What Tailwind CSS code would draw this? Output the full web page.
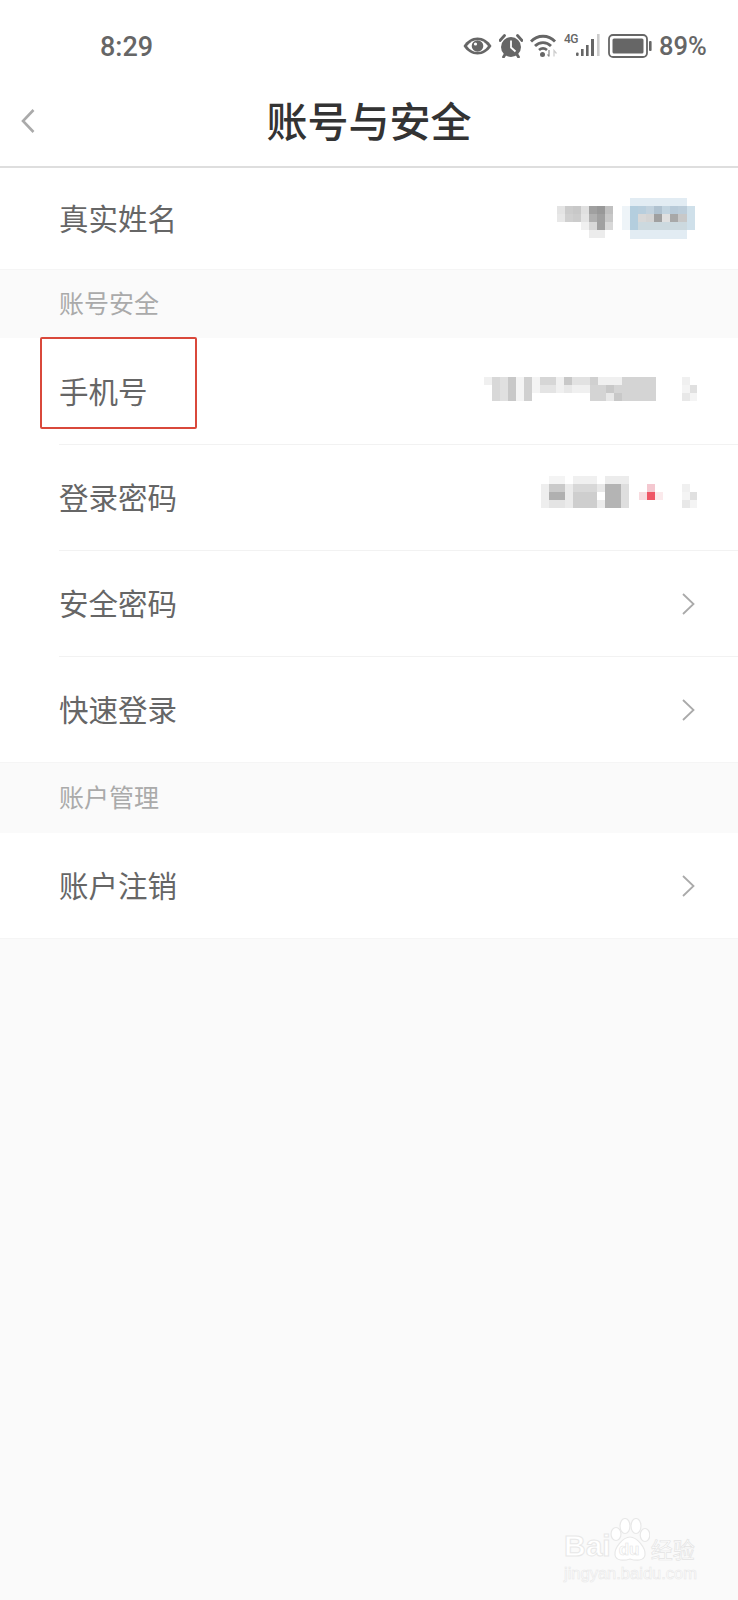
<!DOCTYPE html>
<html lang="zh-CN">
<head>
    <meta charset="UTF-8">
    <meta name="viewport" content="width=device-width, initial-scale=1.0">
    <title>账号与安全</title>
    <script src="https://cdn.jsdelivr.net/npm/@tailwindcss/browser@4"></script>
</head>
<body class="bg-[#fafafa] font-['Noto_Sans_CJK_SC','Noto_Sans',sans-serif]">
<div class="relative w-[738px] h-[1600px] overflow-hidden bg-[#fafafa]">

    <!-- Status bar -->
    <div class="h-[78px] bg-white flex items-center pl-[100px] pr-[31px] pt-[16px] text-[#666] font-['Roboto',sans-serif]">
        <span class="text-[27px] leading-none font-medium">8:29</span>
        <div class="ml-auto flex items-center mb-[3px]">
            <!-- eye -->
            <svg class="w-[29px] h-[18px]" viewBox="0 0 29 18">
                <path d="M0.500 9C4 3.500 9 0.500 14.500 0.500S25 3.500 28.500 9C25 14.500 20 17.500 14.500 17.500S4 14.500 0.500 9Z" fill="#666"/>
                <path d="M4 9C7 5 10.500 3 14.500 3S22 5 25 9C22 13 18.500 15 14.500 15S7 13 4 9Z" fill="#fff"/>
                <circle cx="14.500" cy="9" r="5.800" fill="#666"/>
                <circle cx="12.500" cy="7" r="1.600" fill="#fff"/>
            </svg>
            <!-- alarm -->
            <svg class="w-[24px] h-[24px] ml-[7px]" viewBox="0 0 24 24">
                <path d="M1 6.500L5.500 1.500M23 6.500L18.500 1.500" stroke="#666" stroke-width="2.800" stroke-linecap="round"/>
                <path d="M6 20.500L4.500 23M18 20.500L19.500 23" stroke="#666" stroke-width="2.800" stroke-linecap="round"/>
                <circle cx="12" cy="13" r="10" fill="#666"/>
                <path d="M12 6.500V13.500L16.500 17.500" fill="none" stroke="#fff" stroke-width="1.800"/>
            </svg>
            <!-- wifi -->
            <svg class="w-[27px] h-[23px] ml-[7px]" viewBox="0 0 27 23">
                <path d="M1 7.500C7.500 0.500 18.500 0.500 25 7.500" fill="none" stroke="#666" stroke-width="2.800"/>
                <path d="M5 12C9.500 7.500 16.500 7.500 21 12" fill="none" stroke="#666" stroke-width="2.800"/>
                <path d="M9 16C11.500 14 14.500 14 17 16" fill="none" stroke="#666" stroke-width="2.800"/>
                <circle cx="12.500" cy="20.500" r="2.500" fill="#666"/>
                <path d="M19 16V22.500M19 22.500L17.500 20.500" stroke="#888" stroke-width="1.200" fill="none"/>
                <path d="M24 22.500V16.500L26.500 19.500" stroke="#ccc" stroke-width="1.200" fill="none"/>
            </svg>
            <!-- signal -->
            <div class="relative w-[37px] h-[23px] ml-[6px]">
                <span class="absolute left-[1px] top-[-1px] text-[12px] leading-[12px] font-medium text-[#666] tracking-[-0.5px]">4G</span>
                <svg class="w-[37px] h-[23px]" viewBox="0 0 37 23">
                    <rect x="13" y="18.500" width="2.600" height="3.500" rx="1" fill="#666"/>
                    <rect x="18" y="15" width="2.600" height="7" fill="#666"/>
                    <rect x="23" y="11" width="2.600" height="11" fill="#666"/>
                    <rect x="28" y="5" width="3" height="17" fill="#666"/>
                    <rect x="34" y="0" width="2.600" height="22" fill="#ccc"/>
                </svg>
            </div>
            <!-- battery -->
            <svg class="w-[44px] h-[24px] ml-[8px]" viewBox="0 0 44 24">
                <rect x="1" y="1" width="38" height="22" rx="4" fill="none" stroke="#666" stroke-width="1.800"/>
                <rect x="4.500" y="4.500" width="31" height="15" rx="1.500" fill="#666"/>
                <rect x="41" y="7" width="2.600" height="10" rx="1" fill="#666"/>
            </svg>
            <span class="w-[48px] ml-[7px] mt-[3px] text-[25.500px] leading-none font-medium whitespace-nowrap">89%</span>
        </div>
    </div>

    <!-- Title bar -->
    <div class="h-[90px] bg-white border-b-2 border-[#dedede] grid grid-cols-[1fr_auto_1fr] items-center pb-[2px]">
        <svg class="w-[16px] h-[26px] ml-[20px]" viewBox="0 0 16 26">
            <path d="M13.500 2L3 13L13.500 24" fill="none" stroke="#aaa" stroke-width="2.600"/>
        </svg>
        <h1 class="text-[41px] leading-none font-medium text-[#333] mb-[3px]">账号与安全</h1>
    </div>

    <!-- Real name -->
    <div class="h-[101px] bg-white flex items-center pl-[59px] pr-[41px] text-[29.500px] text-[#666]">
        <span class="mb-[2px]">真实姓名</span>
        <svg class="ml-auto w-[140px] h-[42px] blur-[0.6px]" viewBox="0 0 140 42" shape-rendering="crispEdges">
            <g>
                <rect x="0" y="8" width="8" height="8" fill="#e4e4e4"/><rect x="8" y="8" width="8" height="8" fill="#ccc"/><rect x="16" y="8" width="8" height="8" fill="#c8c8c8"/><rect x="24" y="8" width="8" height="8" fill="#e0e0e0"/><rect x="32" y="8" width="8" height="8" fill="#a0a0a0"/><rect x="40" y="8" width="8" height="8" fill="#989898"/><rect x="48" y="8" width="8" height="8" fill="#c0c0c0"/>
                <rect x="0" y="16" width="8" height="8" fill="#e8e8e8"/><rect x="8" y="16" width="8" height="8" fill="#d0d0d0"/><rect x="16" y="16" width="8" height="8" fill="#ccc"/><rect x="24" y="16" width="8" height="8" fill="#e4e4e4"/><rect x="32" y="16" width="8" height="8" fill="#b0b0b0"/><rect x="40" y="16" width="8" height="8" fill="#a0a0a0"/><rect x="48" y="16" width="8" height="8" fill="#c8c8c8"/>
                <rect x="24" y="24" width="8" height="8" fill="#f0f0f0"/><rect x="32" y="24" width="8" height="8" fill="#d8d8d8"/><rect x="40" y="24" width="8" height="8" fill="#a0a0a0"/><rect x="48" y="24" width="8" height="8" fill="#d8d8d8"/>
                <rect x="32" y="32" width="16" height="8" fill="#ececec"/>
            </g>
            <g>
                <rect x="73" y="0" width="57" height="41" fill="#e2ecf3"/>
                <rect x="65" y="8" width="8" height="24" fill="#eef4f8"/>
                <rect x="130" y="8" width="8" height="24" fill="#cfe0ea"/>
                <rect x="73" y="8" width="8" height="24" fill="#b4cede"/>
                <rect x="81" y="8" width="8" height="8" fill="#b8cedd"/><rect x="89" y="8" width="8" height="8" fill="#c2d2de"/><rect x="97" y="8" width="8" height="8" fill="#b0c2d0"/><rect x="105" y="8" width="8" height="8" fill="#c2d4e0"/><rect x="113" y="8" width="8" height="8" fill="#b8cad8"/><rect x="121" y="8" width="9" height="8" fill="#bccdda"/>
                <rect x="81" y="16" width="8" height="8" fill="#d8d8d8"/><rect x="89" y="16" width="8" height="8" fill="#d4d4d4"/><rect x="97" y="16" width="8" height="8" fill="#a0a0a0"/><rect x="105" y="16" width="8" height="8" fill="#e0e0e0"/><rect x="113" y="16" width="8" height="8" fill="#a8a8a8"/><rect x="121" y="16" width="9" height="8" fill="#c8c8c8"/>
                <rect x="81" y="24" width="49" height="8" fill="#ccd9df"/>
            </g>
        </svg>
    </div>

    <div class="h-[69px] bg-[#fafafa] border-t border-[#f5f5f5] flex items-center pl-[59px] text-[25px] text-[#aaa]">
        <span class="mb-[2px]">账号安全</span>
    </div>

    <!-- Account security rows -->
    <div class="relative bg-white">
        <div class="h-[106px] flex items-center pl-[59px] pr-[41px] text-[29.500px] text-[#666]">
            <span class="mb-[2px]">手机号</span>
            <svg class="ml-auto w-[213px] h-[26px] blur-[0.6px] mb-[2px]" viewBox="0 0 213 26" shape-rendering="crispEdges">
                <rect x="0" y="0" width="8" height="8" fill="#f0f0f0"/><rect x="8" y="0" width="8" height="24" fill="#d8d8d8"/><rect x="16" y="0" width="8" height="24" fill="#e0e0e0"/><rect x="24" y="0" width="8" height="24" fill="#c8c8c8"/><rect x="32" y="0" width="8" height="24" fill="#f4f4f4"/><rect x="40" y="0" width="8" height="24" fill="#d0d0d0"/>
                <rect x="48" y="0" width="8" height="16" fill="#f4f4f4"/><rect x="56" y="0" width="16" height="8" fill="#d6d6d6"/><rect x="72" y="0" width="8" height="8" fill="#f0f0f0"/><rect x="80" y="0" width="8" height="8" fill="#c8c8c8"/><rect x="88" y="0" width="18" height="8" fill="#e2e2e2"/>
                <rect x="56" y="8" width="16" height="8" fill="#e4e4e4"/><rect x="72" y="8" width="8" height="8" fill="#f0f0f0"/><rect x="80" y="8" width="8" height="8" fill="#e8e8e8"/><rect x="88" y="8" width="18" height="8" fill="#f0f0f0"/>
                <rect x="106" y="0" width="8" height="8" fill="#d0d0d0"/><rect x="114" y="0" width="24" height="8" fill="#f0f0f0"/><rect x="138" y="0" width="34" height="8" fill="#d4d4d4"/>
                <rect x="106" y="8" width="66" height="16" fill="#d4d4d4"/><rect x="122" y="8" width="8" height="8" fill="#c8c8c8"/><rect x="122" y="16" width="8" height="8" fill="#e8e8e8"/><rect x="130" y="16" width="8" height="8" fill="#c8c8c8"/>
                <rect x="198" y="0" width="8" height="8" fill="#f0f0f0"/><rect x="198" y="8" width="8" height="8" fill="#f4f4f4"/><rect x="206" y="8" width="7" height="8" fill="#e0e0e0"/><rect x="198" y="16" width="8" height="8" fill="#e8e8e8"/><rect x="206" y="16" width="7" height="8" fill="#f4f4f4"/>
            </svg>
        </div>
        <!-- red annotation box -->
        <div class="absolute left-[40px] top-[-1px] w-[157px] h-[92px] border-2 border-[#d9483b] rounded-[2px]"></div>
        <div class="ml-[59px] border-t border-[#f2f2f2]">
            <div class="h-[105px] flex items-center pr-[41px] text-[29.500px] text-[#666]">
                <span class="mb-[2px]">登录密码</span>
                <svg class="ml-auto w-[156px] h-[33px] blur-[0.6px] mb-[10px]" viewBox="0 0 156 33" shape-rendering="crispEdges">
                    <rect x="8" y="0" width="16" height="8" fill="#f4f4f4"/><rect x="32" y="0" width="24" height="8" fill="#f0f0f0"/><rect x="64" y="0" width="24" height="8" fill="#ececec"/>
                    <rect x="0" y="8" width="8" height="24" fill="#eee"/><rect x="8" y="8" width="16" height="8" fill="#cacaca"/><rect x="8" y="16" width="16" height="8" fill="#b0b0b0"/><rect x="8" y="24" width="16" height="8" fill="#e4e4e4"/><rect x="24" y="8" width="8" height="24" fill="#ebebeb"/>
                    <rect x="32" y="8" width="24" height="8" fill="#d8d8d8"/><rect x="32" y="16" width="24" height="16" fill="#cecece"/><rect x="56" y="8" width="8" height="8" fill="#e8e8e8"/><rect x="56" y="16" width="8" height="8" fill="#fff"/><rect x="56" y="24" width="8" height="8" fill="#ececec"/>
                    <rect x="64" y="8" width="16" height="24" fill="#b4b4b4"/><rect x="80" y="8" width="8" height="24" fill="#dedede"/>
                    <rect x="98" y="16" width="8" height="8" fill="#f8dce0"/><rect x="106" y="8" width="8" height="8" fill="#f4c8d0"/><rect x="106" y="16" width="8" height="8" fill="#ef5565"/><rect x="114" y="16" width="8" height="8" fill="#fbeaec"/>
                    <rect x="141" y="8" width="8" height="8" fill="#f0f0f0"/><rect x="141" y="16" width="8" height="8" fill="#f4f4f4"/><rect x="149" y="16" width="7" height="8" fill="#e0e0e0"/><rect x="141" y="24" width="8" height="8" fill="#e8e8e8"/><rect x="149" y="24" width="7" height="8" fill="#f4f4f4"/>
                </svg>
            </div>
        </div>
        <div class="ml-[59px] border-t border-[#f2f2f2]">
            <div class="h-[105px] flex items-center pr-[43px] text-[29.500px] text-[#666]">
                <span class="mb-[2px]">安全密码</span>
                <svg class="ml-auto w-[13px] h-[22px]" viewBox="0 0 13 22"><path d="M1 1L11.500 11L1 21" fill="none" stroke="#aaa" stroke-width="1.800"/></svg>
            </div>
        </div>
        <div class="ml-[59px] border-t border-[#f2f2f2]">
            <div class="h-[105px] flex items-center pr-[43px] text-[29.500px] text-[#666]">
                <span class="mb-[2px]">快速登录</span>
                <svg class="ml-auto w-[13px] h-[22px]" viewBox="0 0 13 22"><path d="M1 1L11.500 11L1 21" fill="none" stroke="#aaa" stroke-width="1.800"/></svg>
            </div>
        </div>
    </div>

    <div class="h-[71px] bg-[#fafafa] border-t border-[#f5f5f5] flex items-center pl-[59px] text-[25px] text-[#aaa]">
        <span class="mb-[2px]">账户管理</span>
    </div>

    <!-- Account management -->
    <div class="h-[106px] bg-white border-b border-[#f5f5f5] flex items-center pl-[59px] pr-[43px] text-[29.500px] text-[#666]">
        <span class="mb-[2px]">账户注销</span>
        <svg class="ml-auto w-[13px] h-[22px]" viewBox="0 0 13 22"><path d="M1 1L11.500 11L1 21" fill="none" stroke="#aaa" stroke-width="1.800"/></svg>
    </div>

    <!-- Baidu watermark -->
    <div class="absolute right-[40px] top-[1516px] w-[134px] flex flex-col text-white [-webkit-text-stroke:1px_#e8e8e8]">
        <div class="flex items-end h-[46px]">
            <span class="text-[30px] leading-[32px] font-bold font-['Liberation_Sans',sans-serif] -mr-[1px]">Bai</span>
            <div class="relative w-[40px] h-[44px] shrink-0">
                <svg class="w-[40px] h-[44px]" viewBox="0 0 40 44" fill="#fff" stroke="#e8e8e8" stroke-width="1.200">
                    <ellipse cx="6" cy="16" rx="5" ry="6.500"/>
                    <ellipse cx="15" cy="8" rx="5" ry="7.500"/>
                    <ellipse cx="26" cy="8" rx="5" ry="7.500"/>
                    <ellipse cx="35" cy="17" rx="4.800" ry="6.500"/>
                    <path d="M20 19C27 19 36 30 35 37C34 43 26 43 20 41C14 43 6 43 5 37C4 30 13 19 20 19Z"/>
                </svg>
                <span class="absolute left-[9px] top-[22px] text-[17px] leading-[20px] font-bold font-['Liberation_Sans',sans-serif] [-webkit-text-stroke:0.6px_#e4e4e4]">du</span>
            </div>
            <span class="ml-[1px] text-[22px] leading-[28px] whitespace-nowrap [-webkit-text-stroke:0.7px_#e4e4e4]">经验</span>
        </div>
        <span class="mt-[3px] text-[16.500px] leading-[17px] whitespace-nowrap font-['Liberation_Sans',sans-serif] [-webkit-text-stroke:0.6px_#e8e8e8]">jingyan.baidu.com</span>
    </div>

</div>
</body>
</html>
